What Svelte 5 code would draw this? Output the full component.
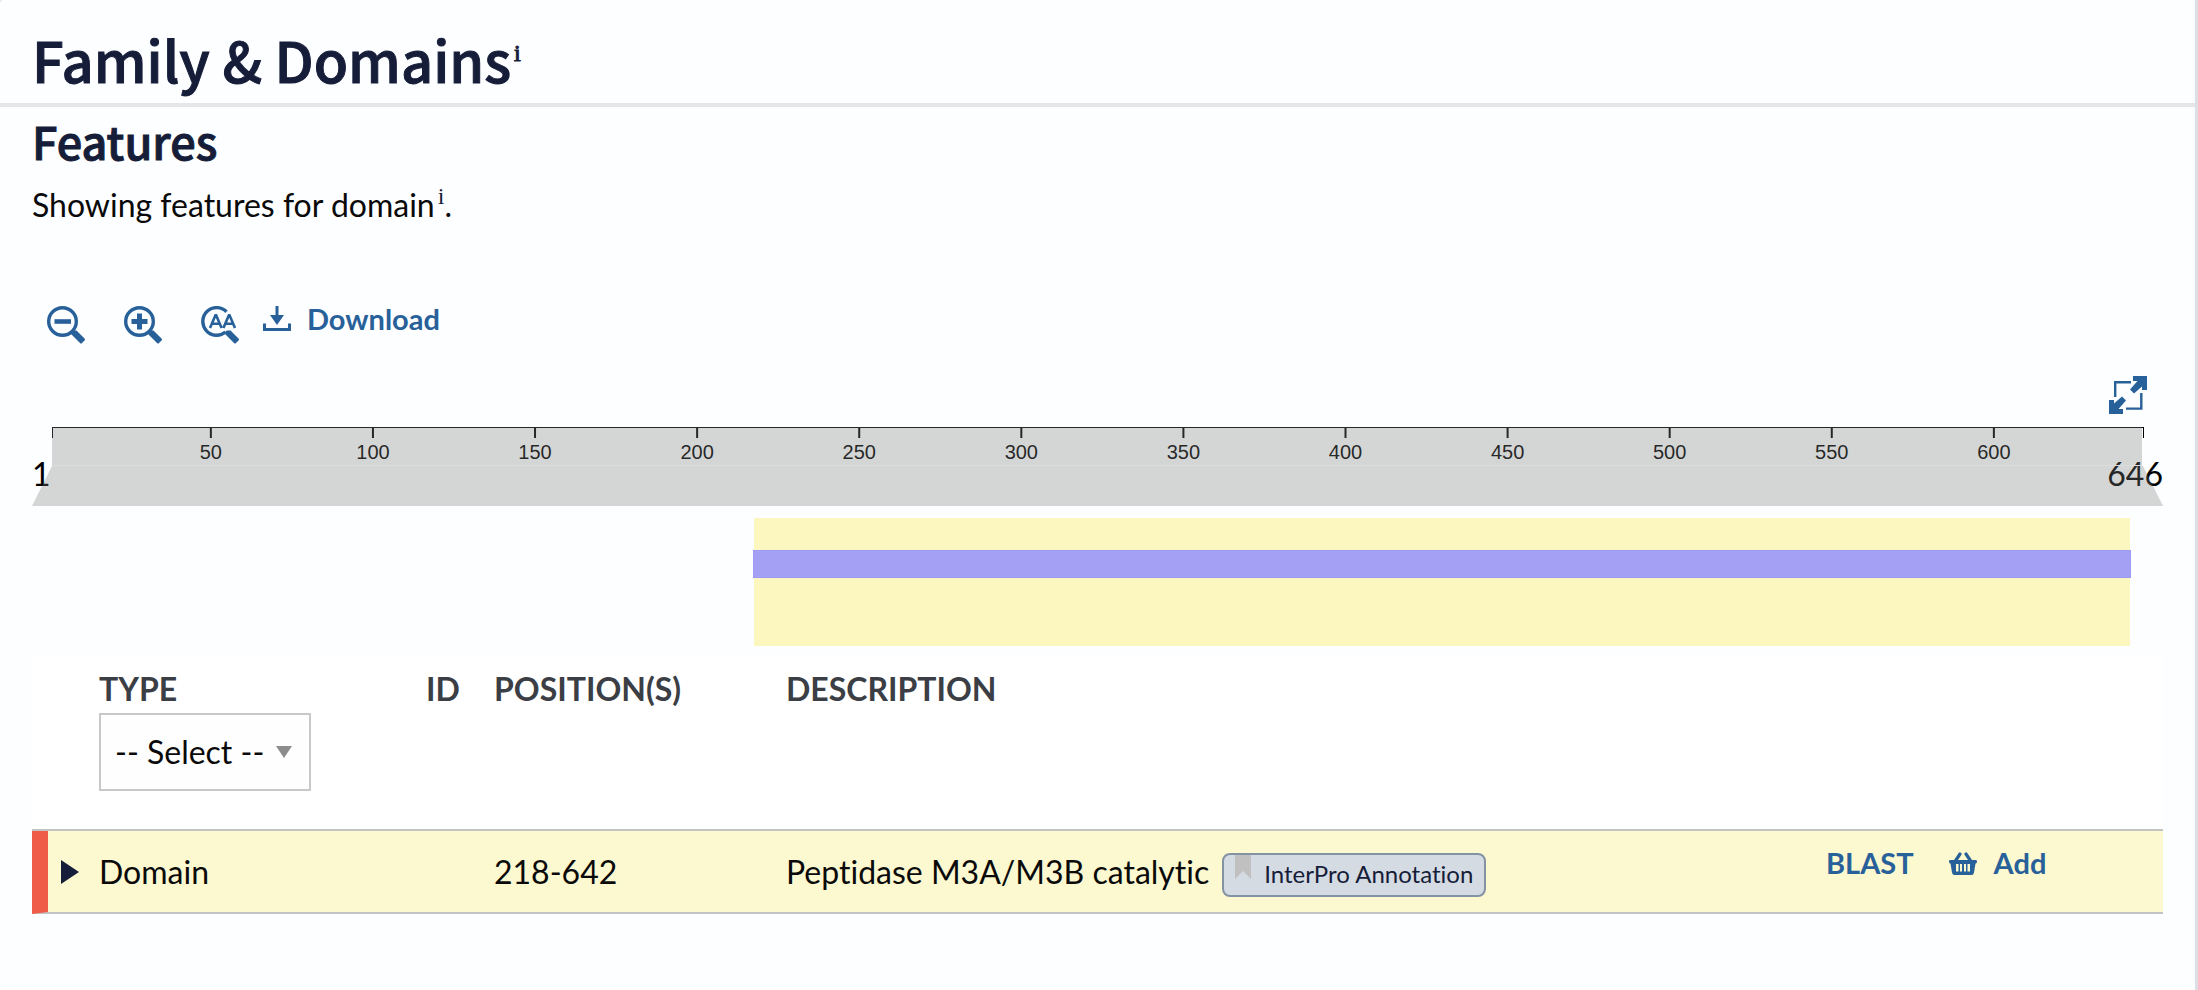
<script>
  const length = 646;
  const ticks = [50, 100, 150, 200, 250, 300, 350, 400, 450, 500, 550, 600];
  const features = [
    { type: 'Domain', start: 218, end: 642, description: 'Peptidase M3A/M3B catalytic', source: 'InterPro Annotation' }
  ];
  const percent = (position) => ((position - 1) / (length - 1)) * 100;
  let selected = $state('');
  const rows = $derived(features.filter((f) => !selected || f.type === selected));
</script>

<main class="card">
  <header>
    <h1>Family &amp; Domains<sup>i</sup></h1>
  </header>
  <section class="content">
    <h2>Features</h2>
    <p class="intro">Showing features for domain<sup>i</sup>.</p>

    <div class="toolbar">
      <button class="tool" aria-label="Zoom out">
        <svg viewBox="0 0 38 38" width="38" height="38">
          <circle cx="15.5" cy="15.5" r="13.8" fill="none" stroke="currentColor" stroke-width="3.4" />
          <path d="M7.500 13.2h16.500v4.6H7.500z" fill="currentColor" />
          <path d="M29.500 24.500L37.500 32.500Q38.500 33.500 37.500 34.500L35 37Q34 38 33 37L24.500 28.500V25.500L26 24.500z" fill="currentColor" />
        </svg>
      </button>
      <button class="tool" aria-label="Zoom in">
        <svg viewBox="0 0 38 38" width="38" height="38">
          <circle cx="15.5" cy="15.5" r="13.8" fill="none" stroke="currentColor" stroke-width="3.4" />
          <path d="M7.500 13h5.500V7.500h5V13h5.500v5H18v5.500h-5V18H7.500z" fill="currentColor" />
          <path d="M29.500 24.500L37.500 32.500Q38.500 33.500 37.500 34.500L35 37Q34 38 33 37L24.500 28.500V25.500L26 24.500z" fill="currentColor" />
        </svg>
      </button>
      <button class="tool" aria-label="Zoom to sequence">
        <svg viewBox="0 0 38 38" width="38" height="38">
          <path d="M25.500 5.800A13.800 13.800 0 1 0 24.500 26" fill="none" stroke="currentColor" stroke-width="3.4" />
          <path d="M9 22L14.800 8.500L20.600 22M11 17.800h7.600M22.400 22L28.200 8.500L34 22M24.400 17.800h7.600" fill="none" stroke="currentColor" stroke-width="2.600" stroke-linejoin="bevel" />
          <path d="M29.500 24.500L37.500 32.500Q38.500 33.500 37.500 34.500L35 37Q34 38 33 37L24.500 28.500V25.500L26 24.500z" fill="currentColor" />
        </svg>
      </button>
      <button class="download">
        <svg viewBox="0 0 28 26" width="28" height="26">
          <path d="M1.500 17.500v6h25v-6" fill="none" stroke="currentColor" stroke-width="3" />
          <path d="M12.500 0h3v9H21l-7 10L7 9h5.500z" fill="currentColor" />
        </svg>
        Download
      </button>
    </div>

    <div class="expand-row">
      <button class="tool" aria-label="Full screen">
        <svg viewBox="0 0 38 38" width="38" height="38" fill="currentColor">
          <path d="M6.200 21V6.200H22M32.300 17v15.600H17" fill="none" stroke="currentColor" stroke-width="2.400" />
          <path d="M24 0h14v14h-5v-3.500l-8 7-4-4L28.500 5H24zM14 38H0V24h5v3.500l8-7 4 4L9.500 33H14z" />
        </svg>
      </button>
    </div>

    <div class="ruler">
      <svg class="axis" width="100%" height="38">
        <rect x="0" y="0" width="100%" height="1" />
        <rect x="0" y="0" width="1" height="11" />
        {#each ticks as tick}
          <svg x="{percent(tick)}%" overflow="visible">
            <rect x="-1" y="0" width="2" height="11" />
            <text x="0" y="32" text-anchor="middle">{tick}</text>
          </svg>
        {/each}
        <svg x="100%" overflow="visible"><rect x="0" y="0" width="1" height="11" /></svg>
      </svg>
      <span class="end first">1</span>
      <span class="end last">{length}</span>
      <div class="window"></div>
      <div class="slope"></div>
    </div>

    <div class="track">
      {#each rows as f}
        <div class="highlight" style="left: {percent(f.start - 0.5)}%; right: {100 - percent(f.end)}%">
          <div class="bar"></div>
        </div>
      {/each}
    </div>

    <table>
      <colgroup>
        <col class="c-toggle" /><col class="c-type" /><col class="c-id" /><col class="c-pos" /><col /><col class="c-actions" />
      </colgroup>
      <thead>
        <tr>
          <th></th>
          <th>
            <label for="type-filter">TYPE</label>
            <div class="select">
              <select id="type-filter" bind:value={selected}>
                <option value="">-- Select --</option>
                <option>Domain</option>
              </select>
              <svg viewBox="0 0 16 12" width="16" height="12"><path d="M0 0h16L8 12z" fill="#8c8c8c" /></svg>
            </div>
          </th>
          <th>ID</th>
          <th>POSITION(S)</th>
          <th>DESCRIPTION</th>
          <th></th>
        </tr>
      </thead>
      <tbody>
        {#each rows as f}
          <tr>
            <td class="toggle">
              <button aria-label="Expand row">
                <svg viewBox="0 0 18 24" width="18" height="24"><path d="M0 0l18 12L0 24z" fill="#161d39" /></svg>
              </button>
            </td>
            <td>{f.type}</td>
            <td></td>
            <td>{f.start}-{f.end}</td>
            <td>
              <div class="description">
                {f.description}
                <button class="tag">
                  <svg viewBox="0 0 16 24" width="16" height="24"><path d="M0 0h16v24l-8-8-8 8z" fill="#c0c0c0" /></svg>
                  {f.source}
                </button>
              </div>
            </td>
            <td>
              <div class="actions">
                <button>BLAST</button>
                <button>
                  <svg viewBox="0 0 28 23" width="28" height="23">
                    <path d="M6 9.500L11 2M22 9.500L17 2" fill="none" stroke="currentColor" stroke-width="3.200" stroke-linecap="round" />
                    <path fill="currentColor" fill-rule="evenodd" d="M1 8h26q1 0 1 1.500T27 11.500h-.500L25 20.500q-.400 2.500-2.500 2.500h-17Q3.400 23 3 20.500L1.500 11.500H1Q0 11.500 0 9.500T1 8zM7 12v7.500h2.500V12zM11 12v7.500h2V12zM15 12v7.500h2V12zM18.500 12v7.500H21V12z" />
                  </svg>
                  Add
                </button>
              </div>
            </td>
          </tr>
        {/each}
      </tbody>
    </table>
  </section>
</main>

<style>
  :global(body) {
    margin: 0;
    background: #e4e6e8;
  }
  .card {
    box-sizing: border-box;
    min-height: 100vh;
    background: #fdfeff;
    border-right: 3px solid #dcdfe4;
    border-top-left-radius: 4px;
    font-family: Lato, sans-serif;
    font-size: 32px;
    font-variant-ligatures: none;
    line-height: 40px;
    color: #0a0a0a;
  }
  header {
    padding: 27px 32px 12px;
    border-bottom: 4px solid #e4e6e8;
  }
  h1, h2 {
    margin: 0;
    font-family: "Noto Sans CJK SC", "Open Sans", sans-serif;
    font-weight: 500;
    color: #161d39;
    -webkit-text-stroke: 1px #161d39;
  }
  h1 { font-size: 56px; line-height: 64px; }
  h2 { font-size: 45px; line-height: 52px; }
  sup {
    margin-left: 3px;
    font-family: "Liberation Serif", serif;
    font-size: 24px;
    line-height: 0;
    color: #161d39;
    vertical-align: baseline;
    position: relative;
    bottom: 13px;
  }
  h1 sup { bottom: 22px; }
  .content { padding: 8px 32px 0; }
  .intro { margin: 18px 0 0; }
  button {
    padding: 0;
    border: 0;
    background: none;
    font: inherit;
    font-variant-ligatures: none;
    color: #28619a;
    cursor: pointer;
  }
  svg { display: block; flex: none; }
  .toolbar {
    display: flex;
    align-items: flex-start;
    gap: 39px;
    margin-top: 78px;
    padding-left: 15px;
  }
  .toolbar .tool { padding-top: 3px; }
  .download {
    display: flex;
    align-items: center;
    gap: 16px;
    margin-left: -15px;
    font-size: 29px;
    font-weight: 700;
    line-height: 32px;
  }
  .expand-row {
    display: flex;
    justify-content: flex-end;
    margin-top: 32px;
    padding-right: 16px;
  }
  .ruler {
    position: relative;
    margin-top: 13px;
    height: 79px;
  }
  .axis {
    box-sizing: border-box;
    width: calc(100% - 40px);
    margin: 0 20px;
    overflow: visible;
    font-family: "Liberation Sans", Arial, sans-serif;
    font-size: 20px;
  }
  .end {
    position: absolute;
    top: 27px;
    color: #000;
  }
  .first { left: 0; }
  .last { right: 0; }
  .window, .slope {
    position: absolute;
    background: rgb(123 125 124 / 0.31);
  }
  .window {
    box-sizing: border-box;
    top: 0;
    left: 20px;
    right: 21px;
    height: 39px;
    border-bottom: 1px solid #dcdedd;
    background-clip: padding-box;
  }
  .slope {
    top: 39px;
    left: 0;
    right: 0;
    height: 40px;
    clip-path: polygon(20px 0, calc(100% - 20px) 0, 100% 100%, 0 100%);
  }
  .track {
    position: relative;
    height: 128px;
    margin: 12px 20px 0;
  }
  .highlight {
    position: absolute;
    top: 0;
    bottom: 0;
    box-sizing: border-box;
    padding-top: 32px;
    background: #fcf6bf;
  }
  .bar {
    box-sizing: border-box;
    height: 28px;
    margin: 0 -1px;
    background: #a4a1f4;
    border: 1px solid #9c99f7;
  }
  table {
    width: 100%;
    margin-top: 11px;
    table-layout: fixed;
    border-spacing: 0;
    background: #fff;
  }
  .c-toggle { width: 59px; }
  .c-type { width: 327px; }
  .c-id { width: 68px; }
  .c-pos { width: 292px; }
  .c-actions { width: 345px; }
  th {
    padding: 12px 0 38px 8px;
    border-bottom: 2px solid #c2c4c3;
    text-align: left;
    vertical-align: top;
    font-weight: 700;
    color: #3b3e44;
  }
  label { display: block; }
  .select {
    position: relative;
    width: 212px;
    margin-top: 4px;
  }
  .select svg {
    position: absolute;
    right: 19px;
    top: 33px;
    pointer-events: none;
  }
  select {
    display: block;
    width: 100%;
    height: 78px;
    padding: 0 14px;
    border: 2px solid #c8c8c8;
    border-radius: 0;
    appearance: none;
    background: #fefefe;
    font: inherit;
    font-weight: 400;
    color: #0a0a0a;
  }
  td {
    height: 81px;
    padding: 0 0 0 8px;
    border-bottom: 2px solid #c2c4c3;
    background: #fcf8cf;
  }
  td.toggle {
    padding-left: 13px;
    border-left: 16px solid #ef5d49;
  }
  .toggle button { display: block; }
  .description {
    display: flex;
    align-items: center;
    gap: 13px;
    white-space: nowrap;
  }
  .tag {
    box-sizing: border-box;
    display: flex;
    gap: 13px;
    height: 44px;
    margin-top: 7px;
    padding: 0 11px;
    border: 2px solid #8393a4;
    border-radius: 8px;
    background: #d5dbe3;
    font-size: 24px;
    line-height: 38px;
    color: #161d39;
  }
  .actions {
    display: flex;
    gap: 35px;
    padding-bottom: 17px;
    font-size: 29px;
    font-weight: 700;
    line-height: 32px;
  }
  .actions button {
    display: flex;
    align-items: center;
    gap: 17px;
  }
</style>
